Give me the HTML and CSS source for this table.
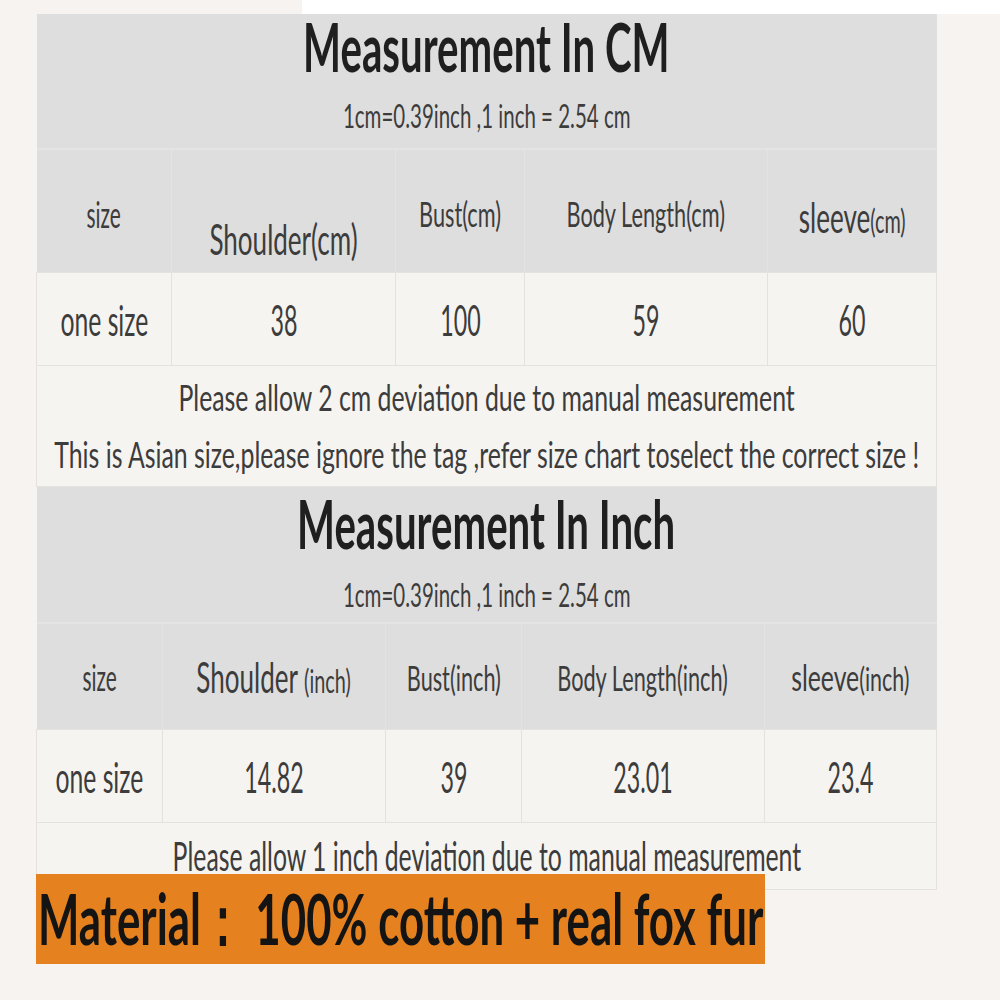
FILE: index.html
```html
<!DOCTYPE html>
<html>
<head>
<meta charset="utf-8">
<link rel="stylesheet" href="styles.css">
</head>
<body>
<div class="topstrip"><div class="ts-left"></div><div class="ts-right"></div></div>
<div class="sheet">
  <table class="chart cm">
    <colgroup><col style="width:135px"><col style="width:224px"><col style="width:129px"><col style="width:243px"><col style="width:169px"></colgroup>
    <tr class="title-row"><td colspan="5">
      <div class="title"><span class="sq">Measurement In CM</span></div>
      <div class="subtitle"><span class="sq">1cm=0.39inch ,1 inch = 2.54 cm</span></div>
    </td></tr>
    <tr class="head-row">
      <td><span class="sq h-size">size</span></td>
      <td class="low"><span class="sq h-big">Shoulder(cm)</span></td>
      <td><span class="sq h-mid">Bust(cm)</span></td>
      <td><span class="sq h-mid">Body Length(cm)</span></td>
      <td><span class="sq"><span class="h-sleeve">sleeve</span><span class="h-unit">(cm)</span></span></td>
    </tr>
    <tr class="data-row">
      <td><span class="sq word">one size</span></td>
      <td><span class="sq">38</span></td>
      <td><span class="sq">100</span></td>
      <td><span class="sq">59</span></td>
      <td><span class="sq">60</span></td>
    </tr>
    <tr class="note-row"><td colspan="5">
      <div class="note"><span class="sq">Please allow 2 cm deviation due to manual measurement</span></div>
      <div class="note"><span class="sq">This is Asian size,please ignore the tag ,refer size chart toselect the correct size !</span></div>
    </td></tr>
  </table>
  <table class="chart inch">
    <colgroup><col style="width:126px"><col style="width:223px"><col style="width:136px"><col style="width:243px"><col style="width:172px"></colgroup>
    <tr class="title-row"><td colspan="5">
      <div class="title"><span class="sq">Measurement In Inch</span></div>
      <div class="subtitle"><span class="sq">1cm=0.39inch ,1 inch = 2.54 cm</span></div>
    </td></tr>
    <tr class="head-row">
      <td><span class="sq h-size">size</span></td>
      <td><span class="sq"><span class="h-big">Shoulder </span><span class="h-unit">(inch)</span></span></td>
      <td><span class="sq h-mid">Bust(inch)</span></td>
      <td><span class="sq h-mid">Body Length(inch)</span></td>
      <td><span class="sq wide"><span class="h-sleeve2">sleeve</span><span class="h-unit">(inch)</span></span></td>
    </tr>
    <tr class="data-row">
      <td><span class="sq word">one size</span></td>
      <td><span class="sq">14.82</span></td>
      <td><span class="sq">39</span></td>
      <td><span class="sq">23.01</span></td>
      <td><span class="sq">23.4</span></td>
    </tr>
    <tr class="note-row short"><td colspan="5">
      <div class="note note-lg"><span class="sq">Please allow 1 inch deviation due to manual measurement</span></div>
    </td></tr>
  </table>
  <div class="material"><span class="mat">Material：&nbsp;100% cotton + real fox fur</span></div>
</div>
</body>
</html>
```

FILE: styles.css
```css
html, body {
  margin: 0;
  padding: 0;
  background: #f6f3f0;
  font-family: Lato, "Open Sans", sans-serif;
  color: #3c3c3c;
}
.topstrip {
  display: flex;
  height: 14px;
}
.ts-left { width: 302px; background: #f6f3f0; }
.ts-right { flex: 1; background: #ffffff; }
.sheet {
  margin-left: 36px;
  width: 900px;
}
.chart {
  width: 900px;
  table-layout: fixed;
  border-collapse: collapse;
}
.chart td {
  padding: 0;
  text-align: center;
  vertical-align: middle;
  white-space: nowrap;
}
.sq {
  display: inline-block;
  transform: scaleX(0.62);
  transform-origin: center;
  white-space: nowrap;
  margin: 0 -150px;
}
.title-row td {
  background: #dedede;
  border-bottom: 2px solid #e4e4e4;
  vertical-align: top;
  padding-top: 2px;
}
.cm .title-row td { height: 132px; }
.inch .title-row td { height: 129px; padding-top: 6px; }
.inch .subtitle { margin-top: 22px; }
.title, .subtitle, .note {
  display: flex;
  justify-content: center;
}
.title {
  font-size: 67px;
  font-weight: 700;
  color: #1f1f1f;
  line-height: 60px;
}
.title .sq { transform: scaleX(0.6); }
.subtitle {
  font-size: 32px;
  line-height: 40px;
  margin-top: 20px;
}
.subtitle .sq { transform: scaleX(0.64); }
.head-row td {
  background: #dedede;
  border-left: 1px solid #e3e3e3;
}
.head-row td:first-child { border-left: none; }
.cm .head-row td { vertical-align: top; padding-top: 42px; height: 80px; }
.cm .head-row td.low { padding-top: 64px; height: 58px; }
.inch .head-row td { height: 105px; }
.h-size { font-size: 36px; }
.sq.h-size { transform: scaleX(0.58); }
.h-big { font-size: 42px; }
.h-mid { font-size: 35px; }
.h-sleeve { font-size: 42px; }
.h-sleeve2 { font-size: 37px; }
.h-unit { font-size: 32px; }
.sq.wide { transform: scaleX(0.67); }
.data-row td {
  background: #f6f4f1;
  border: 1px solid #e4e2df;
  height: 92px;
  font-size: 43px;
}
.data-row .sq { transform: scaleX(0.54); }
.data-row .sq.word { transform: scaleX(0.575); }
.note-row td {
  background: #f6f4f1;
  border: 1px solid #e4e2df;
  height: 120px;
}
.note {
  font-size: 36px;
  line-height: 57px;
}
.note .sq { transform: scaleX(0.69); }
.note-row.short td { height: 63px; vertical-align: top; padding-top: 3px; }
.note-lg {
  font-size: 40px;
  line-height: 60px;
}
.note-lg .sq { transform: scaleX(0.62); }
.material {
  margin-top: -16px;
  width: 729px;
  height: 90px;
  background: #e5821f;
  color: #141414;
  font-weight: 700;
  font-size: 70px;
  line-height: 88px;
  white-space: nowrap;
  overflow: hidden;
}
.mat {
  display: inline-block;
  transform: scaleX(0.626);
  transform-origin: left center;
  margin-left: 2px;
}
```
